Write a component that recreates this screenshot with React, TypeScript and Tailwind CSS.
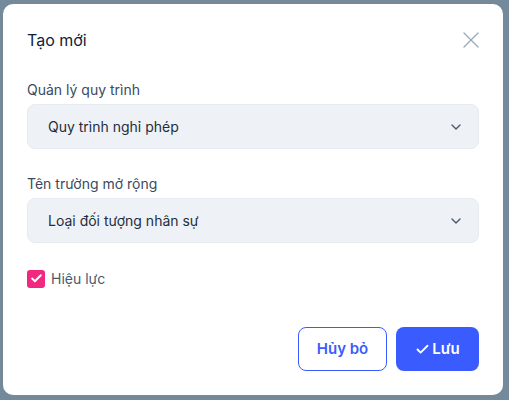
import { ChevronDown, X, Check } from "lucide-react";

const font = { fontFamily: "Inter, 'Noto Sans', sans-serif" };

const SelectField = ({ label, value }: { label: string; value: string }) => {
  return <div>
      <div className="text-[14px] leading-[20px] text-[#3b4a5e] mb-[4px]">{label}</div>
      <div className="h-[45px] rounded-[8px] bg-[#eef2f6] border border-[#e6ebf1] flex items-center justify-between pl-[20px] pr-[14px]">
        <span className="text-[14px] text-[#1f2d3d]">{value}</span>
        <ChevronDown size={16} strokeWidth={2} className="text-[#475569]" />
      </div>
    </div>;
};

export default function App() {
  return <div className="h-[400px] w-[509px] bg-[#748a9a] pt-[4px] pl-[3px]" style={font}>
      <div className="w-[500px] h-[391px] bg-white rounded-[10px] px-[24px] pt-[24px] pb-[24px] flex flex-col">
        <div className="flex items-center justify-between h-[24px]">
          <h2 className="text-[16px] leading-[24px] font-normal text-[#0f2236]">Tạo mới</h2>
          <X size={28} strokeWidth={1.1} className="text-[#9aa9b8] -mr-[6px]" />
        </div>
        <div className="mt-[28px]">
          <SelectField label="Quản lý quy trình" value="Quy trình nghỉ phép" />
        </div>
        <div className="mt-[25px]">
          <SelectField label="Tên trường mở rộng" value="Loại đối tượng nhân sự" />
        </div>
        <label className="mt-[25px] flex items-center gap-[6px]">
          <span className="w-[18px] h-[18px] rounded-[3px] bg-[#f0287f] flex items-center justify-center">
            <Check size={13} strokeWidth={3.5} className="text-white" />
          </span>
          <span className="text-[14px] text-[#4a5a6e]">Hiệu lực</span>
        </label>
        <div className="mt-auto flex justify-end gap-[9px]">
          <button className="w-[89px] h-[44px] rounded-[8px] border border-[#3a5cff] bg-white text-[15px] font-semibold text-[#3a5cff]">
            Hủy bỏ
          </button>
          <button className="w-[83px] h-[44px] rounded-[8px] bg-[#3a5cff] text-[15px] font-semibold text-white flex items-center justify-center gap-[2px]">
            <Check size={15} strokeWidth={3} />
            Lưu
          </button>
        </div>
      </div>
    </div>;
}
